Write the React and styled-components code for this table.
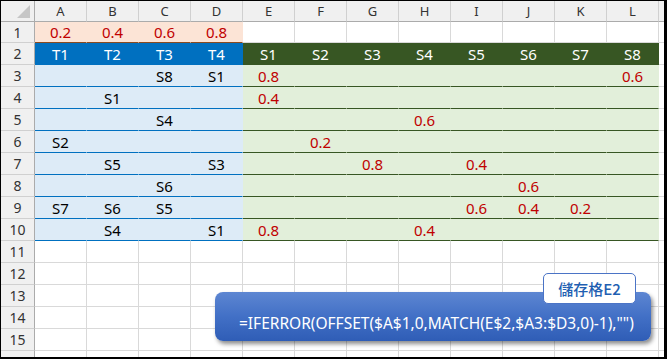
import React from 'react';
import styled, { createGlobalStyle, css } from 'styled-components';

const Global = createGlobalStyle`
  html, body { margin: 0; padding: 0; background: #fff; }
  body { font-family: "Noto Sans", "Noto Sans CJK TC", sans-serif; }
`;

const COLS = ['A', 'B', 'C', 'D', 'E', 'F', 'G', 'H', 'I', 'J', 'K', 'L', ''];
const ROWS = Array.from({ length: 16 }, (_, i) => i + 1);

const LEFT = {
  1: ['0.2', '0.4', '0.6', '0.8'],
  2: ['T1', 'T2', 'T3', 'T4'],
  3: ['', '', 'S8', 'S1'],
  4: ['', 'S1', '', ''],
  5: ['', '', 'S4', ''],
  6: ['S2', '', '', ''],
  7: ['', 'S5', '', 'S3'],
  8: ['', '', 'S6', ''],
  9: ['S7', 'S6', 'S5', ''],
  10: ['', 'S4', '', 'S1'],
};

const RIGHT = {
  2: ['S1', 'S2', 'S3', 'S4', 'S5', 'S6', 'S7', 'S8'],
  3: { 0: '0.8', 7: '0.6' },
  4: { 0: '0.4' },
  5: { 3: '0.6' },
  6: { 1: '0.2' },
  7: { 2: '0.8', 4: '0.4' },
  8: { 5: '0.6' },
  9: { 4: '0.6', 5: '0.4', 6: '0.2' },
  10: { 0: '0.8', 3: '0.4' },
};

const KINDS = {
  plain: { bg: '#ffffff', right: '#d9d9d9', bottom: '#d9d9d9', color: '#000' },
  peach: { bg: '#fce4d6', right: '#fce4d6', bottom: '#8a4a1f', color: '#c00000' },
  blue: { bg: '#0070c0', right: '#0070c0', bottom: '#0070c0', color: '#ffffff' },
  green: { bg: '#375623', right: '#375623', bottom: '#375623', color: '#ffffff' },
  lightBlue: { bg: '#ddebf7', right: '#ddebf7', bottom: '#0070c0', color: '#000000' },
  lightGreen: { bg: '#e2efda', right: '#e2efda', bottom: '#375623', color: '#c00000' },
};

const Frame = styled.div`
  position: relative;
  width: 667px;
  height: 359px;
  box-sizing: border-box;
  border-style: solid;
  border-color: #000;
  border-width: 1px 3px 2px 1px;
  overflow: hidden;
  background: #fff;
`;

const Sheet = styled.div`
  display: grid;
  grid-template-columns: 34px repeat(13, 52px);
  grid-template-rows: 21px 21px repeat(15, 22px);
`;

const headerBase = css`
  box-sizing: border-box;
  background: #f0f0f0;
  color: #333;
  display: flex;
  align-items: center;
  justify-content: center;
`;

const Corner = styled.div`
  ${headerBase};
  position: relative;
  border-right: 1px solid #ababab;
  border-bottom: 1px solid #ababab;
`;

const CornerTriangle = styled.span`
  position: absolute;
  right: 4px;
  bottom: 3px;
  width: 0;
  height: 0;
  border-left: 13px solid transparent;
  border-bottom: 13px solid #c6c6c6;
`;

const ColHeader = styled.div`
  ${headerBase};
  font-size: 13px;
  border-right: 1px solid #d0d0d0;
  border-bottom: 1px solid #ababab;
`;

const RowHeader = styled.div`
  ${headerBase};
  font-size: 14px;
  border-right: 1px solid #ababab;
  border-bottom: 1px solid #d0d0d0;
`;

const Cell = styled.div`
  box-sizing: border-box;
  display: flex;
  align-items: center;
  justify-content: center;
  font-size: 15px;
  background: ${(p) => KINDS[p.$kind].bg};
  color: ${(p) => KINDS[p.$kind].color};
  border-right: 1px solid ${(p) => KINDS[p.$kind].right};
  border-bottom: 1px solid ${(p) => KINDS[p.$kind].bottom};
`;

const Callout = styled.div`
  position: absolute;
  left: 214px;
  top: 291px;
  width: 436px;
  height: 49px;
  box-sizing: border-box;
  border-radius: 8px;
  background: linear-gradient(to bottom, #5d86d2 0%, #4270c6 50%, #2f5db6 100%);
  box-shadow: 2px 3px 4px rgba(0, 0, 0, 0.45);
  display: flex;
  align-items: center;
  padding: 12px 0 0 24px;
`;

const Formula = styled.span`
  color: #fff;
  font-family: "Noto Sans", sans-serif;
  font-size: 15.5px;
  white-space: nowrap;
`;

const Label = styled.div`
  position: absolute;
  left: 542px;
  top: 272px;
  width: 93px;
  height: 31px;
  box-sizing: border-box;
  background: #fff;
  border: 1px solid #4b74c6;
  border-radius: 5px;
  display: flex;
  align-items: center;
  justify-content: center;
  color: #1f5fb2;
  font-family: "Noto Sans CJK TC", "Noto Sans", sans-serif;
  font-size: 15px;
  font-weight: 500;
`;

function kindFor(r, c) {
  if (r === 1 && c < 4) return 'peach';
  if (r === 2 && c < 4) return 'blue';
  if (r === 2 && c >= 4 && c < 12) return 'green';
  if (r >= 3 && r <= 10 && c < 4) return 'lightBlue';
  if (r >= 3 && r <= 10 && c >= 4 && c < 12) return 'lightGreen';
  return 'plain';
}

function valueFor(r, c) {
  if (c < 4) return (LEFT[r] && LEFT[r][c]) || '';
  if (c < 12 && RIGHT[r]) return RIGHT[r][c - 4] || '';
  return '';
}

export default function App() {
  return (
    <>
      <Global />
      <Frame>
        <Sheet>
          <Corner>
            <CornerTriangle />
          </Corner>
          {COLS.map((l, i) => (
            <ColHeader key={i}>{l}</ColHeader>
          ))}
          {ROWS.map((r) => (
            <React.Fragment key={r}>
              <RowHeader>{r <= 15 ? r : ''}</RowHeader>
              {COLS.map((l, c) => (
                <Cell key={c} $kind={kindFor(r, c)}>
                  {valueFor(r, c)}
                </Cell>
              ))}
            </React.Fragment>
          ))}
        </Sheet>
        <Callout>
          <Formula>=IFERROR(OFFSET($A$1,0,MATCH(E$2,$A3:$D3,0)-1),"")</Formula>
        </Callout>
        <Label>儲存格E2</Label>
      </Frame>
    </>
  );
}
